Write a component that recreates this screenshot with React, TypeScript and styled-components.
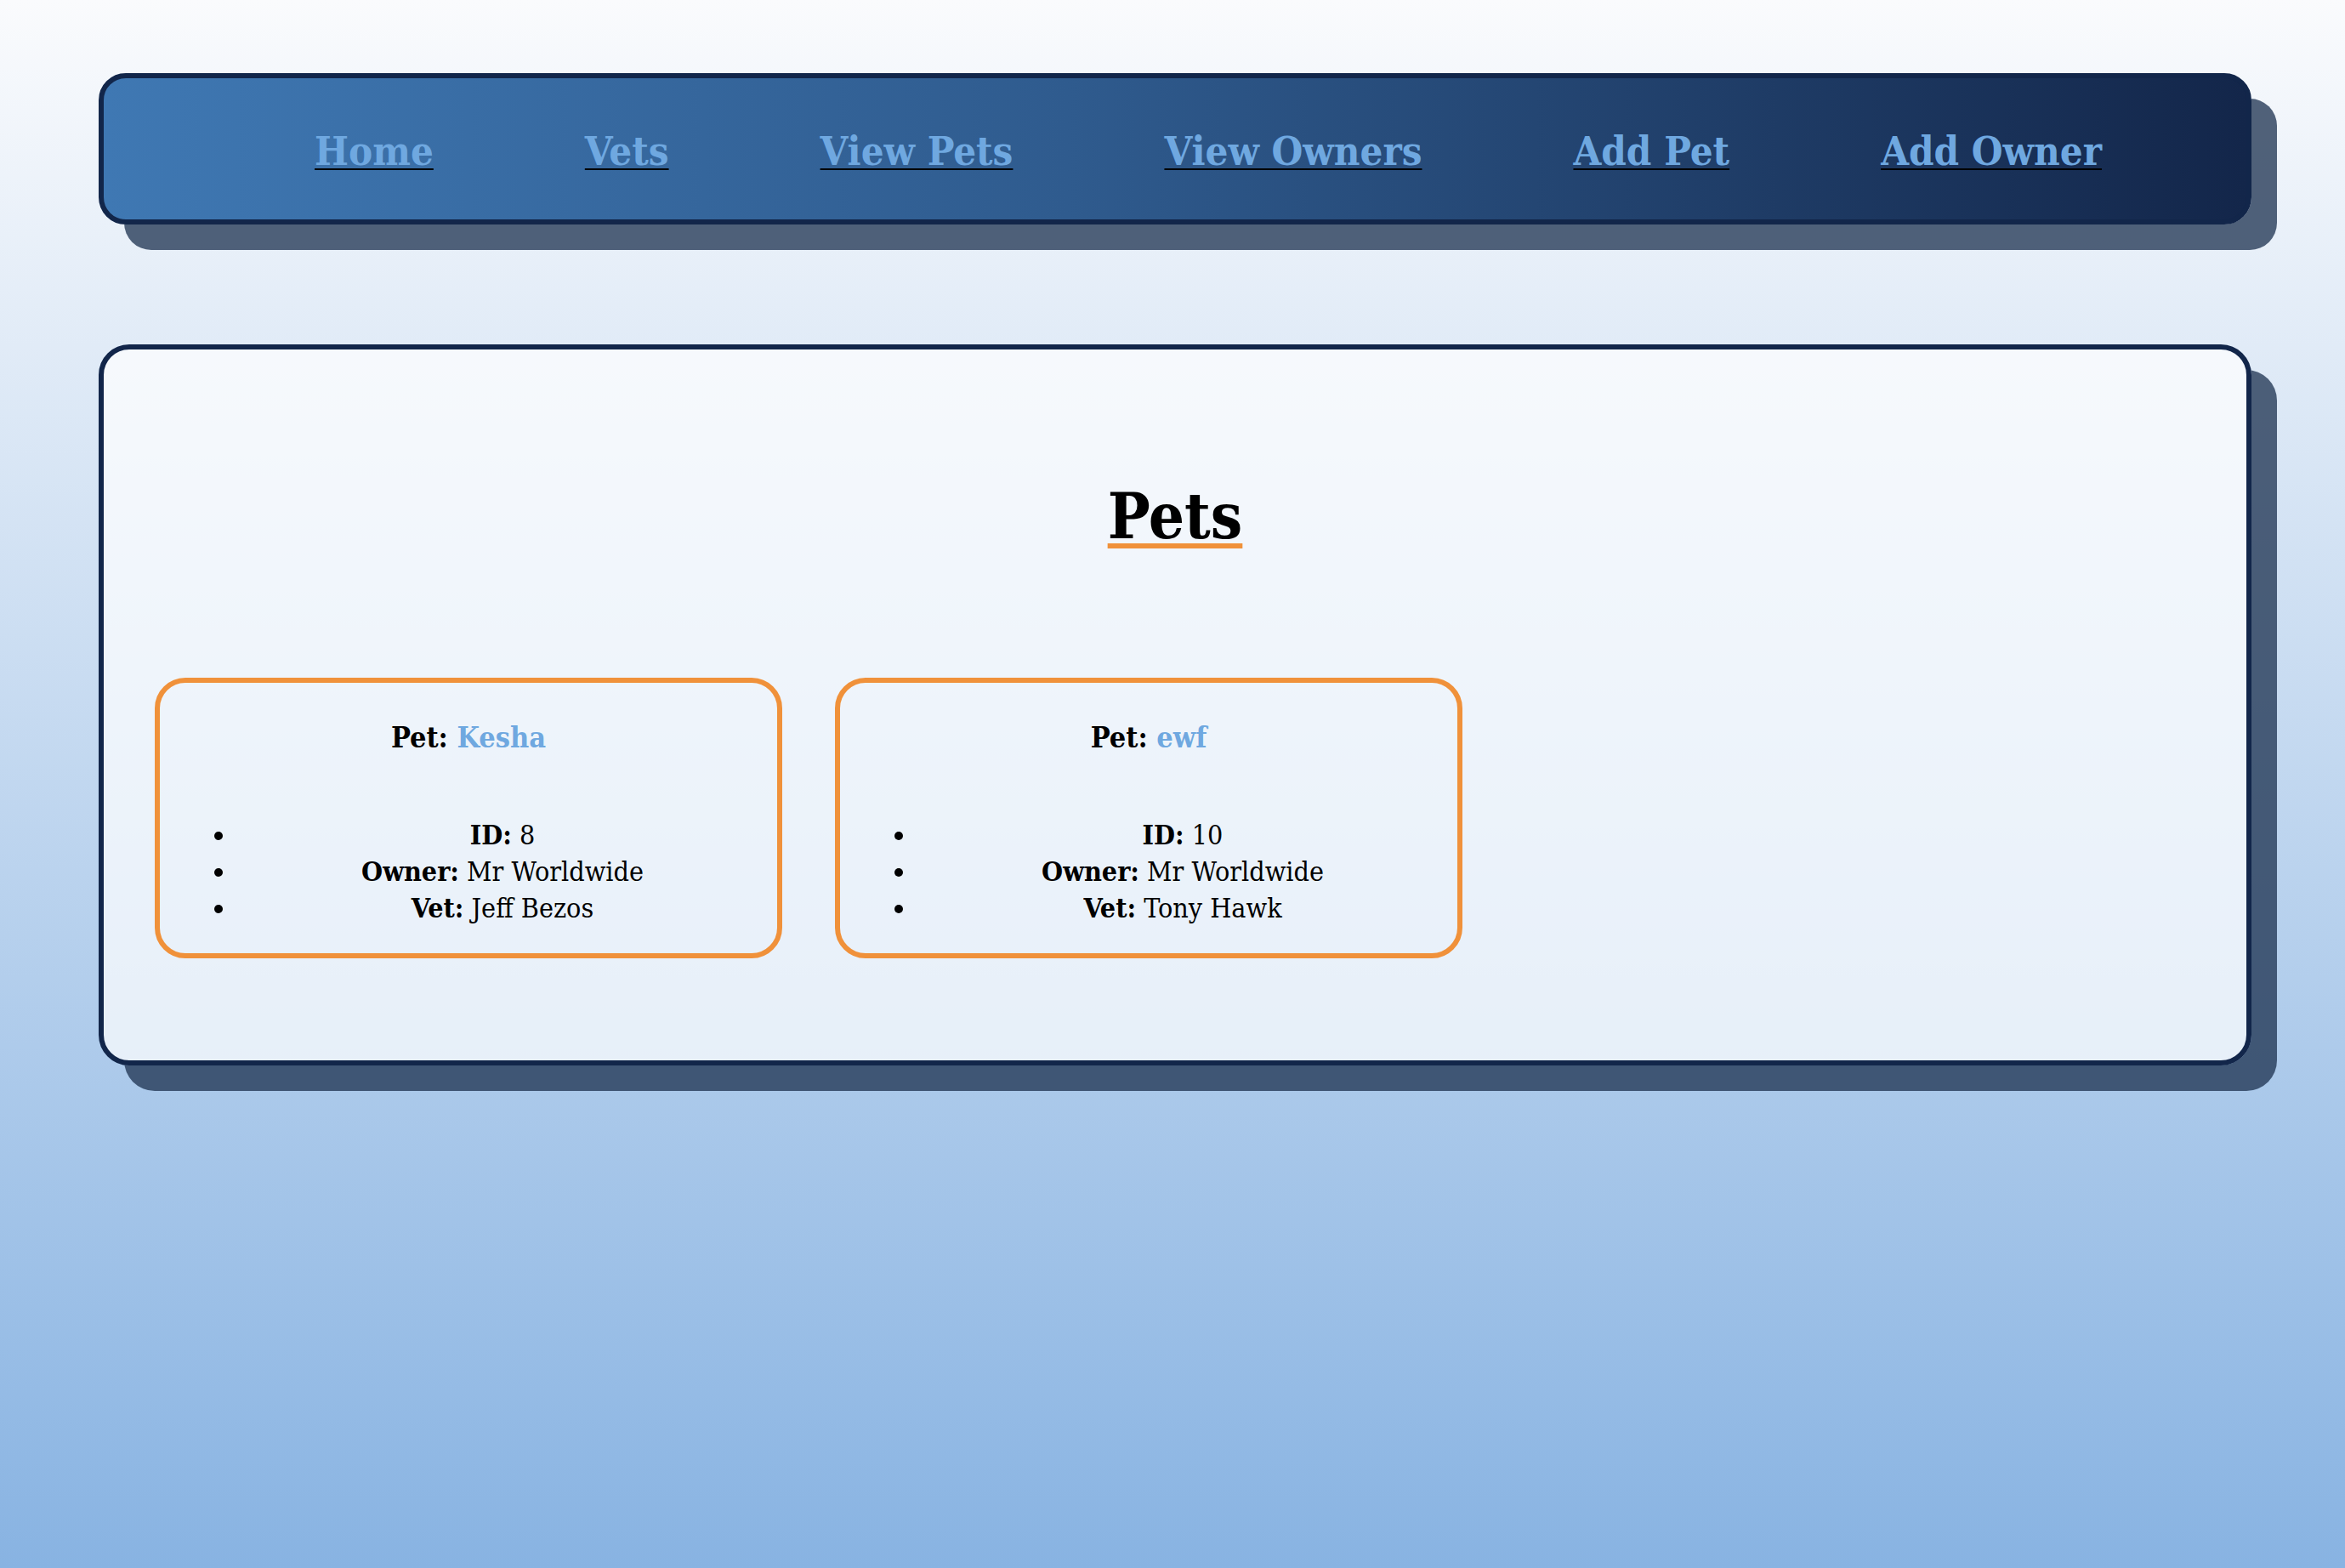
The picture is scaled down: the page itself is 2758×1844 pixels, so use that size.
import React from "react";
import styled, { createGlobalStyle } from "styled-components";

const GlobalStyle = createGlobalStyle`
  html, body {
    margin: 0;
    padding: 0;
  }
  body {
    min-height: 100vh;
    background: linear-gradient(to bottom, #fafbfd 0%, #88b3e2 100%);
    background-attachment: fixed;
    font-family: "Roboto Slab", "DejaVu Serif Condensed", "DejaVu Serif", serif;
    color: #000;
  }
`;

const Page = styled.div`
  min-height: 100vh;
  box-sizing: border-box;
  padding: 86px 110px 40px 116px;
  display: flex;
  flex-direction: column;
`;

const NavBar = styled.nav`
  box-sizing: border-box;
  height: 178px;
  border: 6px solid #12264a;
  border-radius: 32px;
  background: linear-gradient(to right, #3f78b3 0%, #2f5b8e 45%, #13264a 100%);
  box-shadow: 30px 30px 0 rgba(29, 50, 80, 0.76);
  display: flex;
  align-items: center;
  justify-content: space-between;
  padding: 6px 170px 0 248px;
`;

const NavLink = styled.a`
  font-size: 47px;
  line-height: 60px;
  font-weight: 700;
  color: #6fa8e0;
  text-decoration: underline;
  text-decoration-color: #000;
  text-decoration-thickness: 2px;
  text-underline-offset: 4px;
  white-space: nowrap;
  cursor: pointer;
`;

const Panel = styled.main`
  box-sizing: border-box;
  margin-top: 141px;
  border: 6px solid #12264a;
  border-radius: 36px;
  background: rgba(255, 255, 255, 0.7);
  box-shadow: 30px 30px 0 rgba(29, 50, 80, 0.76);
  padding: 156px 60px 120px;
  display: flex;
  flex-direction: column;
`;

const Title = styled.h1`
  margin: 0 auto;
  font-size: 74px;
  line-height: 80px;
  font-weight: 700;
  text-decoration: underline;
  text-decoration-color: #f0913a;
  text-decoration-thickness: 6px;
  text-underline-offset: 6px;
`;

const CardGrid = styled.div`
  margin-top: 150px;
  display: flex;
  flex-wrap: wrap;
  gap: 62px;
`;

const PetCard = styled.section`
  box-sizing: border-box;
  width: 738px;
  height: 330px;
  border: 6px solid #f0913a;
  border-radius: 36px;
  padding: 44px 0 30px;
  display: flex;
  flex-direction: column;
`;

const CardTitle = styled.h3`
  margin: 0;
  text-align: center;
  font-size: 34px;
  line-height: 40px;
  font-weight: 700;
`;

const PetName = styled.span`
  color: #6fa8e0;
`;

const Details = styled.ul`
  margin: 74px 0 0;
  padding: 0 11px 0 91px;
  list-style: disc outside;
`;

const DetailItem = styled.li`
  text-align: center;
  font-size: 32px;
  line-height: 43px;
  font-weight: 400;
`;

const Label = styled.strong`
  font-weight: 700;
`;

type Pet = { name: string; id: number; owner: string; vet: string };

const pets: Pet[] = [
  { name: "Kesha", id: 8, owner: "Mr Worldwide", vet: "Jeff Bezos" },
  { name: "ewf", id: 10, owner: "Mr Worldwide", vet: "Tony Hawk" },
];

const links = ["Home", "Vets", "View Pets", "View Owners", "Add Pet", "Add Owner"];

export default function App() {
  return (
    <>
      <GlobalStyle />
      <Page>
        <NavBar>
          {links.map((l) => (
            <NavLink key={l}>{l}</NavLink>
          ))}
        </NavBar>
        <Panel>
          <Title>Pets</Title>
          <CardGrid>
            {pets.map((p) => (
              <PetCard key={p.id}>
                <CardTitle>
                  Pet: <PetName>{p.name}</PetName>
                </CardTitle>
                <Details>
                  <DetailItem>
                    <Label>ID:</Label> {p.id}
                  </DetailItem>
                  <DetailItem>
                    <Label>Owner:</Label> {p.owner}
                  </DetailItem>
                  <DetailItem>
                    <Label>Vet:</Label> {p.vet}
                  </DetailItem>
                </Details>
              </PetCard>
            ))}
          </CardGrid>
        </Panel>
      </Page>
    </>
  );
}
